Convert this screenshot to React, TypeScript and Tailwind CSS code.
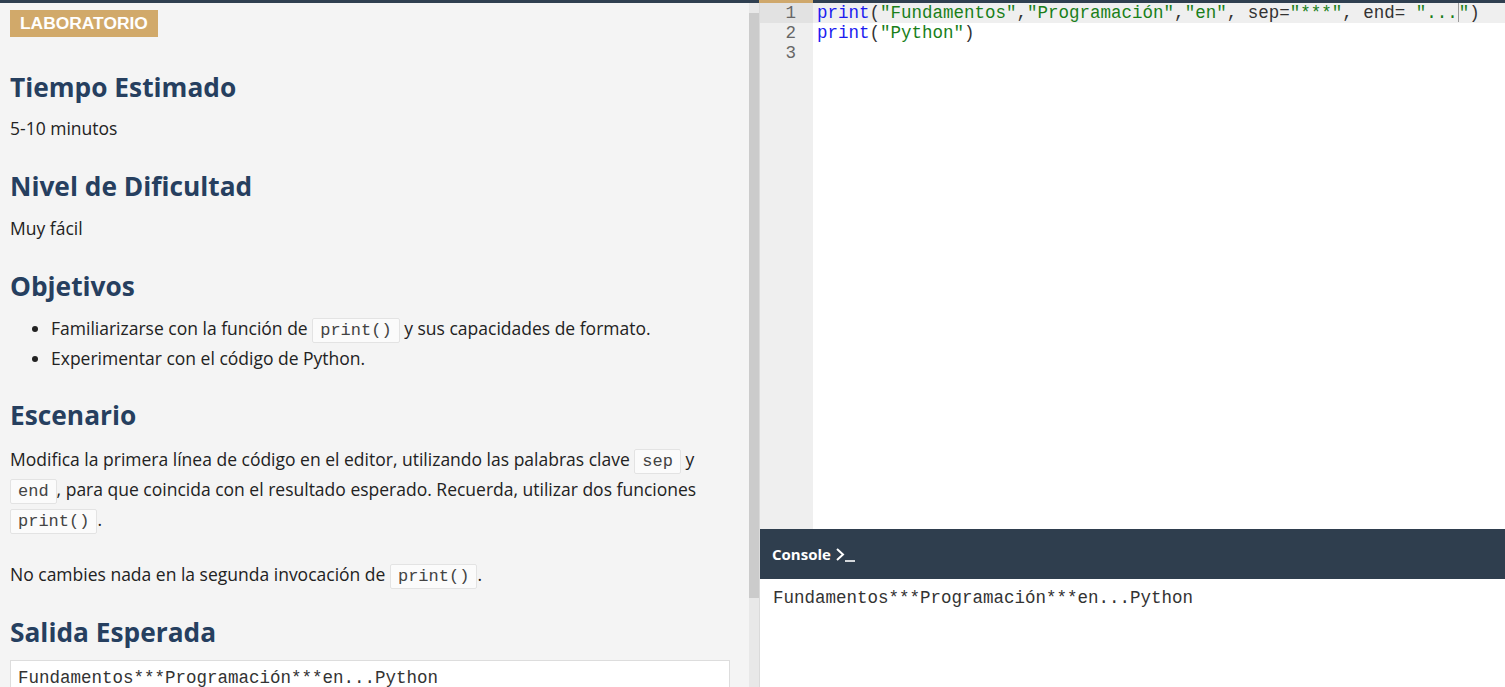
import React from "react";

const mono = "font-['Liberation_Mono','Courier_New',monospace]";

function Code({ children }: { children: React.ReactNode }) {
  return (
    <code
      className={`${mono} rounded-[2px] border border-[#e3e3e3] bg-[#fbfbfb] px-[7px] py-[2px] text-[17px] leading-[19px] text-[#444]`}
    >
      {children}
    </code>
  );
}

function Heading({ children, className = "" }: { children: React.ReactNode; className?: string }) {
  return (
    <h2 className={`text-[26.3px] font-bold leading-[36px] text-[#263f5f] ${className}`}>
      {children}
    </h2>
  );
}

export default function App() {
  return (
    <div className="flex h-[687px] w-full flex-col overflow-hidden font-['Open_Sans',sans-serif]">
      {/* top strip */}
      <div className="flex h-[3px] shrink-0">
        <div className="w-[759px] bg-[#2f3f50]" />
        <div className="w-[54px] bg-[#cfa86c]" />
        <div className="flex-1 bg-[#2f3f50]" />
      </div>

      <div className="flex min-h-0 flex-1">
        {/* instructions */}
        <div className="w-[749px] shrink-0 overflow-hidden bg-[#f4f4f4] pl-[10px] pr-[19px] pt-[4px] text-[17.5px] leading-[30px] text-[#222]">
          <span className="inline-block bg-[#d1a96a] px-[10px] font-['Liberation_Sans',Arial,sans-serif] text-[17.4px] font-bold leading-[27px] text-white">
            LABORATORIO
          </span>

          <Heading className="mt-[32px]">Tiempo Estimado</Heading>
          <p className="mt-[8px]">5-10 minutos</p>

          <Heading className="mt-[25px]">Nivel de Dificultad</Heading>
          <p className="mt-[9px]">Muy fácil</p>

          <Heading className="mt-[25px]">Objetivos</Heading>
          <ul className="mt-[9px] list-disc pl-[41px]">
            <li>
              Familiarizarse con la función de <Code>print()</Code> y sus capacidades de formato.
            </li>
            <li>Experimentar con el código de Python.</li>
          </ul>

          <Heading className="mt-[24px]">Escenario</Heading>
          <p className="mt-[11px]">
            Modifica la primera línea de código en el editor, utilizando las palabras clave <Code>sep</Code> y{" "}
            <Code>end</Code>, para que coincida con el resultado esperado. Recuerda, utilizar dos funciones{" "}
            <Code>print()</Code>.
          </p>
          <p className="mt-[25px]">
            No cambies nada en la segunda invocación de <Code>print()</Code>.
          </p>

          <Heading className="mt-[25px]">Salida Esperada</Heading>
          <div
            className={`mt-[10px] border border-[#dddddd] bg-white px-[7px] pt-[5px] pb-[10px] ${mono} text-[17.5px] leading-[24px] text-[#333]`}
          >
            Fundamentos***Programación***en...Python
          </div>
        </div>

        {/* scrollbar */}
        <div className="w-[11px] shrink-0 border-r border-[#dadada] bg-[#e8e8e8] pt-[10px]">
          <div className="h-[585px] bg-[#cbcbcb]" />
        </div>

        {/* editor + console */}
        <div className="flex min-w-0 flex-1 flex-col bg-white">
          <div className={`flex min-h-0 flex-1 ${mono} text-[17.5px] leading-[20px]`}>
            <div className="w-[53px] shrink-0 bg-[#efefef] text-right text-[#666]">
              <div className="bg-[#e2e2e2] pr-[17px]">1</div>
              <div className="pr-[17px]">2</div>
              <div className="pr-[17px]">3</div>
            </div>
            <div className="min-w-0 flex-1 whitespace-pre">
              <div className="h-[20px] bg-[#efefef] pl-[4px] text-[#333]">
                <span className="text-[#1c1cf0]">print</span>(
                <span className="text-[#1a7f1a]">"Fundamentos"</span>,
                <span className="text-[#1a7f1a]">"Programación"</span>,
                <span className="text-[#1a7f1a]">"en"</span>, sep=
                <span className="text-[#1a7f1a]">"***"</span>, end={" "}
                <span className="text-[#1a7f1a]">"...</span>
                <span className="inline-block h-[19px] w-px align-top bg-[#999]" />
                <span className="text-[#1a7f1a]">"</span>)
              </div>
              <div className="h-[20px] pl-[4px] text-[#333]">
                <span className="text-[#1c1cf0]">print</span>(
                <span className="text-[#1a7f1a]">"Python"</span>)
              </div>
              <div className="h-[20px] pl-[4px]">&nbsp;</div>
            </div>
          </div>

          <div className="flex h-[50px] shrink-0 items-center gap-[5px] bg-[#2f3e4e] pl-[12px] text-[15px] font-bold text-white">
            <span>Console</span>
            <svg width="20" height="14" viewBox="0 0 20 14" className="mt-[2px]">
              <polyline points="1,1 7,6.5 1,12" fill="none" stroke="white" strokeWidth="2" />
              <line x1="9" y1="13" x2="19" y2="13" stroke="white" strokeWidth="1.6" />
            </svg>
          </div>

          <div className={`h-[108px] shrink-0 px-[13px] pt-[8px] ${mono} text-[17.5px] leading-[22px] text-[#333]`}>
            Fundamentos***Programación***en...Python
          </div>
        </div>
      </div>
    </div>
  );
}
